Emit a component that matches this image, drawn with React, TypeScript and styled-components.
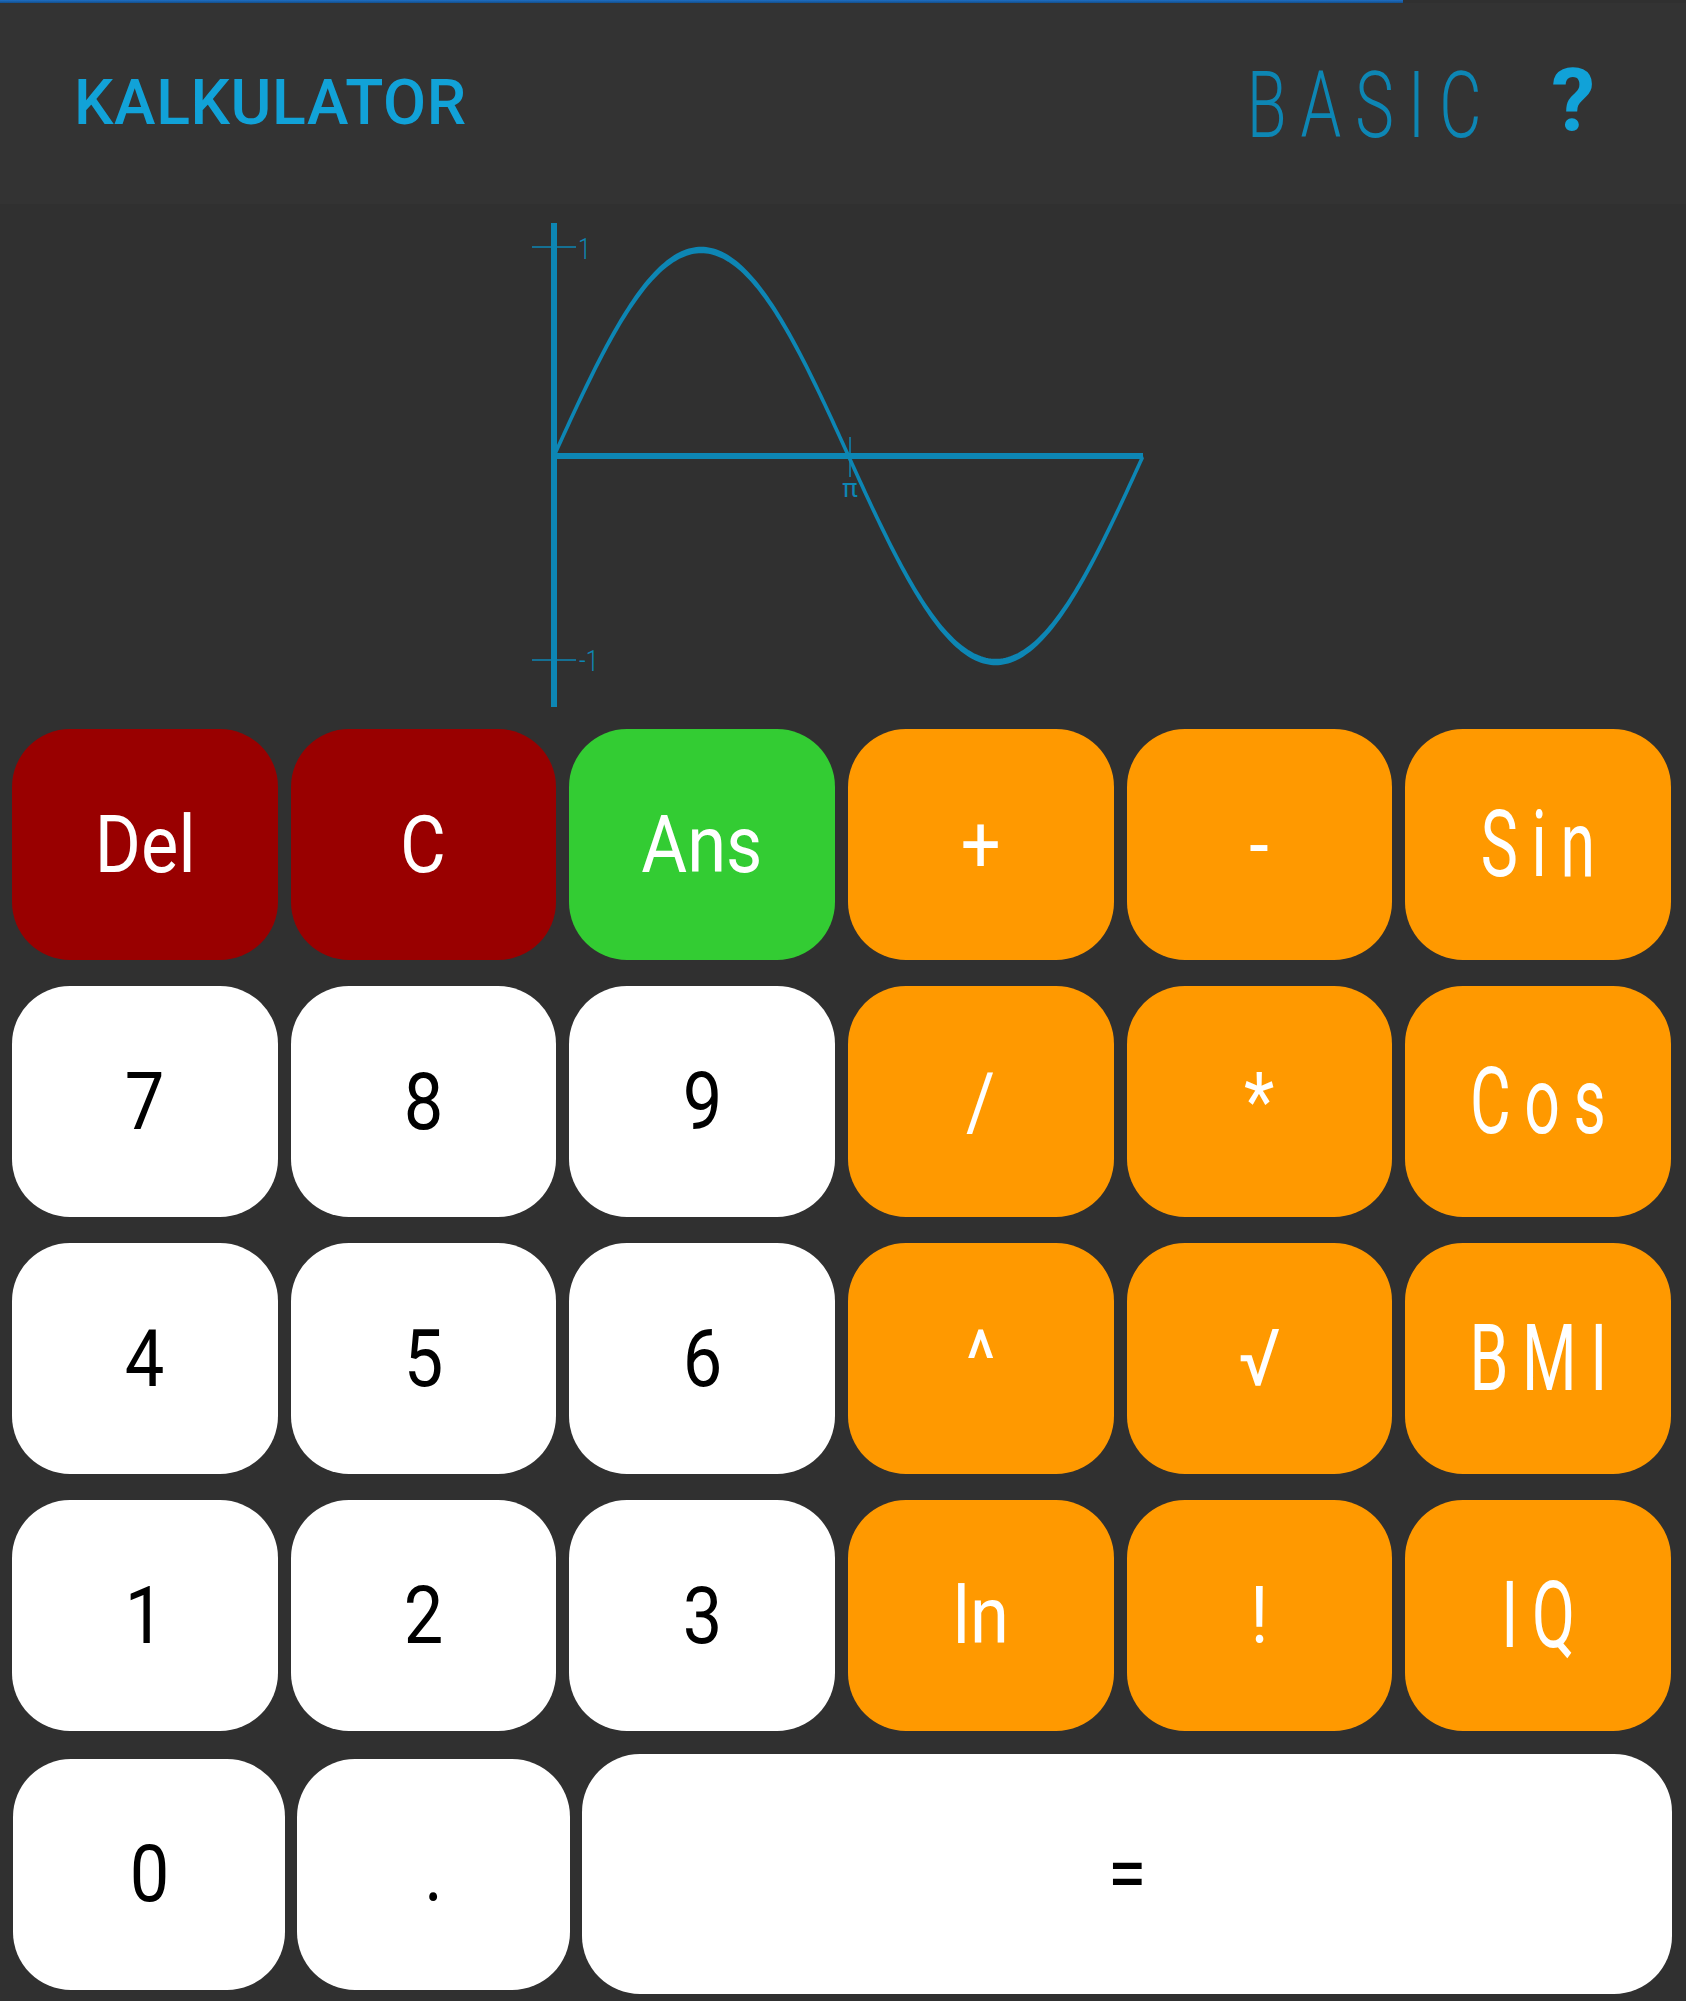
import React, { useMemo } from "react";
import styled, { createGlobalStyle, css } from "styled-components";

const GlobalStyle = createGlobalStyle`
  html, body {
    margin: 0;
    padding: 0;
    background: #303030;
  }
  body {
    font-family: Roboto, "Liberation Sans", Arial, sans-serif;
    width: 1686px;
    height: 2001px;
    overflow: hidden;
  }
  * { box-sizing: border-box; }
`;

const ACCENT = "#0d86b4";
const BRIGHT = "#11a2d8";

const Page = styled.div`
  width: 1686px;
  height: 2001px;
  display: flex;
  flex-direction: column;
  background: #303030;
`;

const TopLine = styled.div`
  width: 1403px;
  height: 3px;
  background: linear-gradient(#1d6ec4, #134f8c);
`;

const Header = styled.header`
  height: 201px;
  background: #333333;
  display: flex;
  align-items: center;
  justify-content: space-between;
  padding: 0 91px 0 74px;
`;

const Title = styled.h1`
  margin: 0;
  font-family: Roboto, "Liberation Sans", sans-serif;
  font-weight: 500;
  font-size: 62.5px;
  line-height: 1;
  color: ${BRIGHT};
  letter-spacing: 0.6px;
`;

const HeaderRight = styled.div`
  display: flex;
  align-items: center;
  gap: 88px;
`;

const Mode = styled.span`
  display: inline-block;
  font-family: Roboto, "Liberation Sans", sans-serif;
  font-weight: 300;
  font-size: 93px;
  line-height: 1;
  color: ${ACCENT};
  letter-spacing: 20px;
  transform: scaleX(0.7);
  transform-origin: right center;
  margin-right: -32px;
  margin-top: 4px;
`;

const Help = styled.span`
  font-family: Roboto, "Liberation Sans", sans-serif;
  font-weight: 700;
  font-size: 88px;
  line-height: 1;
  color: ${BRIGHT};
  margin-top: -8px;
`;

const GraphArea = styled.section`
  height: 525px;
  display: flex;
`;

const GraphSvg = styled.svg`
  display: block;
  width: 1686px;
  height: 525px;
`;

const Keypad = styled.div`
  display: grid;
  grid-template-columns: repeat(6, 1fr);
  grid-auto-rows: 231px;
  column-gap: 13px;
  row-gap: 26px;
  padding: 0 15px 0 12px;
`;

const BottomRow = styled.div`
  display: grid;
  grid-template-columns: 272px 273px 1fr;
  column-gap: 12px;
  align-items: center;
  padding: 23px 14px 0 13px;
`;

type Variant = "red" | "green" | "orange" | "white";

const variantStyles: Record<Variant, ReturnType<typeof css>> = {
  red: css`
    background: #990000;
    color: #ffffff;
  `,
  green: css`
    background: #33cc33;
    color: #ffffff;
  `,
  orange: css`
    background: #ff9900;
    color: #ffffff;
  `,
  white: css`
    background: #ffffff;
    color: #000000;
  `,
};

const Key = styled.button<{ $variant: Variant; $tall?: boolean }>`
  border: none;
  padding: 0;
  margin: 0;
  border-radius: 58px;
  display: flex;
  align-items: center;
  justify-content: center;
  cursor: pointer;
  height: ${(p) => (p.$tall ? "240px" : "231px")};
  font-family: Roboto, "Liberation Sans", "DejaVu Sans", sans-serif;
  ${(p) => variantStyles[p.$variant]}
`;

const Label = styled.span<{ $wide?: boolean }>`
  display: inline-block;
  line-height: 1;
  font-weight: 400;
  ${(p) =>
    p.$wide
      ? css`
          font-size: 92px;
          letter-spacing: 20px;
          padding-left: 20px;
          transform: scaleX(0.68);
        `
      : css`
          font-size: 80px;
          transform: scaleX(0.88);
        `}
`;

type KeyDef = { label: string; variant: Variant; wide?: boolean };

const keys: KeyDef[] = [
  { label: "Del", variant: "red" },
  { label: "C", variant: "red" },
  { label: "Ans", variant: "green" },
  { label: "+", variant: "orange" },
  { label: "-", variant: "orange" },
  { label: "Sin", variant: "orange", wide: true },
  { label: "7", variant: "white" },
  { label: "8", variant: "white" },
  { label: "9", variant: "white" },
  { label: "/", variant: "orange" },
  { label: "*", variant: "orange" },
  { label: "Cos", variant: "orange", wide: true },
  { label: "4", variant: "white" },
  { label: "5", variant: "white" },
  { label: "6", variant: "white" },
  { label: "^", variant: "orange" },
  { label: "√", variant: "orange" },
  { label: "BMI", variant: "orange", wide: true },
  { label: "1", variant: "white" },
  { label: "2", variant: "white" },
  { label: "3", variant: "white" },
  { label: "ln", variant: "orange" },
  { label: "!", variant: "orange" },
  { label: "IQ", variant: "orange", wide: true },
];

const STRETCH = 2.4;

function SineGraph() {
  const path = useMemo(() => {
    const x0 = 554;
    const x1 = 1143;
    const mid = 252;
    const amp = 206;
    const pts: string[] = [];
    for (let i = 0; i <= 240; i++) {
      const x = x0 + ((x1 - x0) * i) / 240;
      const y = mid - amp * Math.sin((2 * Math.PI * (x - x0)) / (x1 - x0));
      pts.push(`${i === 0 ? "M" : "L"}${x.toFixed(2)} ${(y / STRETCH).toFixed(3)}`);
    }
    return pts.join(" ");
  }, []);

  return (
    <GraphSvg viewBox="0 0 1686 525">
      <g transform={`scale(1 ${STRETCH})`}>
        <path d={path} fill="none" stroke={ACCENT} strokeWidth={2.7} />
      </g>
      <rect x={551} y={19} width={6} height={484} fill={ACCENT} />
      <rect x={554} y={249} width={589} height={6} fill={ACCENT} />
      <line x1={532} x2={576} y1={43} y2={43} stroke={ACCENT} strokeWidth={1.5} />
      <line x1={532} x2={576} y1={456} y2={456} stroke={ACCENT} strokeWidth={1.5} />
      <line x1={850} x2={850} y1={233} y2={273} stroke={ACCENT} strokeWidth={1.5} />
      <text
        x={578}
        y={55}
        fill={ACCENT}
        fontFamily="Roboto, sans-serif"
        fontWeight={300}
        fontSize={29}
        transform="translate(578 0) scale(0.8 1) translate(-578 0)"
      >
        1
      </text>
      <text
        x={579}
        y={467}
        fill={ACCENT}
        fontFamily="Roboto, sans-serif"
        fontWeight={300}
        fontSize={29}
        transform="translate(579 0) scale(0.8 1) translate(-579 0)"
      >
        -1
      </text>
      <text
        x={850}
        y={293}
        fill={ACCENT}
        fontFamily="Roboto, 'DejaVu Sans', sans-serif"
        fontSize={26}
        textAnchor="middle"
      >
        π
      </text>
    </GraphSvg>
  );
}

export default function App() {
  return (
    <>
      <GlobalStyle />
      <Page>
        <TopLine />
        <Header>
          <Title>KALKULATOR</Title>
          <HeaderRight>
            <Mode>BASIC</Mode>
            <Help>?</Help>
          </HeaderRight>
        </Header>
        <GraphArea>
          <SineGraph />
        </GraphArea>
        <Keypad>
          {keys.map((k) => (
            <Key key={k.label} $variant={k.variant}>
              <Label $wide={k.wide}>{k.label}</Label>
            </Key>
          ))}
        </Keypad>
        <BottomRow>
          <Key $variant="white">
            <Label>0</Label>
          </Key>
          <Key $variant="white">
            <Label>.</Label>
          </Key>
          <Key $variant="white" $tall>
            <Label>=</Label>
          </Key>
        </BottomRow>
      </Page>
    </>
  );
}
